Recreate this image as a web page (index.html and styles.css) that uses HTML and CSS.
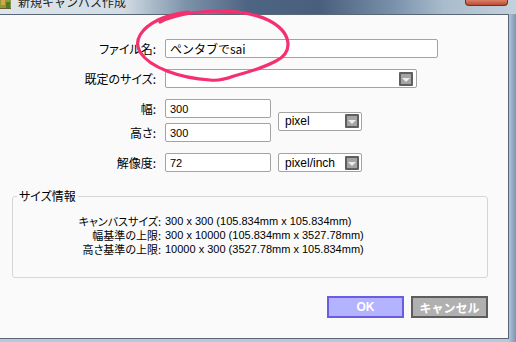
FILE: index.html
```html
<!DOCTYPE html>
<html lang="ja">
<head>
  <meta charset="UTF-8" />
  <title>新規キャンバス作成</title>
  <link rel="stylesheet" href="styles.css">
</head>
<body>
  <div class="window">
    <div class="titlebar">
      <svg class="app-icon" width="12" height="10" viewBox="0 0 12 10">
        <rect x="0" y="0" width="11" height="9" fill="#8a9a3c"/>
        <rect x="1" y="0" width="4" height="5" fill="#d9a441"/>
        <rect x="6" y="2" width="4" height="6" fill="#4f7a2c"/>
        <rect x="0" y="8" width="11" height="1" fill="#6a5a30"/>
      </svg>
      <span class="title">新規キャンバス作成</span>
      <div class="close-btn"></div>
    </div>

    <div class="client">
      <div class="row row-name">
        <span class="label">ファイル名:</span>
        <input class="field field-wide" type="text" value="ペンタブでsai">
      </div>
      <div class="row">
        <span class="label">既定のサイズ:</span>
        <div class="combo combo-wide"><span></span><div class="drop"></div></div>
      </div>

      <div class="size-block">
        <div class="size-rows">
          <div class="row row-tight">
            <span class="label">幅:</span>
            <input class="field field-num" type="text" value="300">
          </div>
          <div class="row row-tight">
            <span class="label">高さ:</span>
            <input class="field field-num" type="text" value="300">
          </div>
        </div>
        <div class="combo combo-unit"><span>pixel</span><div class="drop"></div></div>
      </div>

      <div class="row">
        <span class="label">解像度:</span>
        <input class="field field-num" type="text" value="72">
        <div class="combo combo-unit"><span>pixel/inch</span><div class="drop"></div></div>
      </div>

      <fieldset class="info">
        <legend>サイズ情報</legend>
        <div class="info-grid">
          <span class="info-label">キャンバスサイズ:</span>
          <span class="info-value">300 x 300 (105.834mm x 105.834mm)</span>
          <span class="info-label">幅基準の上限:</span>
          <span class="info-value">300 x 10000 (105.834mm x 3527.78mm)</span>
          <span class="info-label">高さ基準の上限:</span>
          <span class="info-value">10000 x 300 (3527.78mm x 105.834mm)</span>
        </div>
      </fieldset>

      <div class="buttons">
        <button class="btn btn-ok">OK</button>
        <button class="btn btn-cancel">キャンセル</button>
      </div>
    </div>

    <!-- 手書きの丸 -->
    <svg class="scribble" width="516" height="342" viewBox="0 0 516 342">
      <path d="M160 22 C185 10 238 6 268 20 C292 32 294 52 276 61 C263 68 249 72 234 76 C226 79 218 81 210 80 C180 78 150 68 140 52 C133 40 142 28 158 20 C168 15 178 13 188 12"
            fill="none" stroke="#f4306f" stroke-width="3.2" stroke-linecap="round" stroke-linejoin="round"/>
    </svg>
  </div>
</body>
</html>
```

FILE: styles.css
```css
* { margin: 0; padding: 0; box-sizing: border-box; }
body {
  width: 516px; height: 342px;
  overflow: hidden;
  background: #b5cadc;
  font-family: 'Noto Sans CJK JP', sans-serif;
  font-size: 12px;
  color: #000;
}
.window {
  position: relative;
  height: 342px;
  display: flex;
  flex-direction: column;
  background:
    linear-gradient(to right, #abc6dc, #7d94ad) right top / 7px 100% no-repeat,
    #b5cadc;
}

/* タイトルバー */
.titlebar {
  height: 14px; flex: none;
  display: flex; align-items: flex-start;
  overflow: hidden;
  background: linear-gradient(to right, #dde6ec 0%, #d2dce4 24%, #7d92aa 36%, #4d6483 48%, #4a5f7d 62%, #7890aa 76%, #a9bccc 86%, #c3d1dd 100%);
}
.app-icon { flex: none; }
.title {
  margin: -4px 0 0 6px;
  line-height: 12px;
  font-size: 12px;
  color: #1b1b1b;
  white-space: nowrap;
}
.close-btn {
  margin-left: auto; margin-right: 8px;
  width: 43px; height: 6px;
  background: linear-gradient(#d98068, #c04a32);
  border: 1px solid #6b3326; border-top: none;
  border-radius: 0 0 4px 4px;
}

/* クライアント領域 */
.client {
  flex: 1;
  margin: 0 7px 3px 0;
  background: #fafafa;
  border: 1px solid #5b6675;
  border-left: none;
  display: flex;
  flex-direction: column;
}
.row {
  display: flex; align-items: center;
  height: 19px;
  margin-top: 11px;
}
.row-name { margin-top: 24px; }
.row-tight { margin-top: 0; }
.row-tight + .row-tight { margin-top: 5px; }
.label {
  width: 156px;
  margin-right: 9px;
  text-align: right;
  font-feature-settings: "palt";
  line-height: 19px;
  white-space: nowrap;
}
.field {
  height: 19px;
  border: 1px solid #a3a3a3;
  border-radius: 2px;
  background: #fff;
  padding: 0 4px;
  font-family: 'Liberation Sans', 'Noto Sans CJK JP', sans-serif;
  font-size: 11px;
  color: #000;
  outline: none;
}
.field-wide { width: 273px; font-size: 12px; font-family: 'Noto Sans CJK JP', sans-serif; }
.field-num { width: 106px; }

.combo {
  height: 19px;
  border: 1px solid #a3a3a3;
  border-radius: 2px;
  background: #fff;
  display: flex; align-items: center; justify-content: space-between;
  padding: 0 2px 0 6px;
  font-family: 'Liberation Sans', sans-serif;
  font-size: 12px;
}
.combo-wide { width: 252px; padding-right: 3px; }
.combo-unit { width: 84px; margin-left: 7px; }
.drop {
  width: 14px; height: 14px;
  border: 2px solid #5f5f5f;
  border-radius: 1px;
  background: #a4a4a4;
  display: flex; align-items: center; justify-content: center;
}
.drop::after {
  content: '';
  margin-top: 2px;
  border-left: 4px solid transparent;
  border-right: 4px solid transparent;
  border-top: 4px solid #ececec;
}

.size-block { display: flex; align-items: center; margin-top: 11px; }
.size-block .combo-unit { margin-top: 1px; }

/* サイズ情報 */
.info {
  margin: 17px 20px 0 12px;
  border: 1px solid #d6d6d6;
  border-radius: 3px;
  padding: 11px 0 21px;
}
.info legend {
  margin-left: 4px;
  padding: 0 2px;
  line-height: 14px;
  font-feature-settings: "palt";
}
.info-grid {
  display: grid;
  grid-template-columns: 148px auto;
  column-gap: 4px;
  line-height: 14px;
}
.info-label { text-align: right; font-size: 11px; font-feature-settings: "palt"; white-space: nowrap; }
.info-value { font-family: 'Liberation Sans', sans-serif; font-size: 11px; white-space: nowrap; }

/* ボタン */
.buttons {
  display: flex; justify-content: flex-end;
  gap: 7px;
  margin-top: 18px;
  padding-right: 20px;
}
.btn {
  width: 77px; height: 22px;
  color: #fff;
  font-weight: bold;
  font-size: 12px;
  font-family: 'Liberation Sans', 'Noto Sans CJK JP', sans-serif;
  cursor: pointer;
}
.btn-ok { background: #b3b3ff; border: 2px solid #6b5de3; }
.btn-cancel { background: #b0b0b0; border: 2px solid #5d5d5d; }

.scribble {
  position: absolute; top: 0; left: 0;
  pointer-events: none;
}
```
